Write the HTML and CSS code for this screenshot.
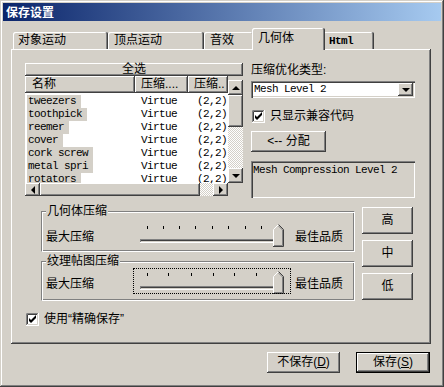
FILE: index.html
```html
<!DOCTYPE html>
<html>
<head>
  <title>保存设置</title>
  <link rel="stylesheet" href="styles.css">
</head>
<body>
  <div class="window">
    <!-- Title bar -->
    <div class="titlebar">保存设置</div>

    <div class="client">
      <!-- Tab strip -->
      <div class="tabs">
        <div class="tab tab-object">对象运动</div>
        <div class="tab tab-vertex">顶点运动</div>
        <div class="tab tab-sound">音效</div>
        <div class="tab tab-geometry selected">几何体</div>
        <div class="tab tab-html mono">Html</div>
      </div>

      <div class="panel">
        <div class="top">
          <!-- Mesh list -->
          <div class="listview">
            <div class="select-all">全选</div>
            <div class="list-header">
              <div class="col col-name">名称</div>
              <div class="col col-type">压缩....</div>
              <div class="col col-level">压缩..</div>
            </div>
            <div class="vscroll">
              <div class="arrow up"></div>
              <div class="thumb"></div>
              <div class="track"></div>
              <div class="arrow down"></div>
            </div>
            <div class="list-body mono">
              <div class="row"><div class="cell-name"><span class="hl">tweezers</span></div><div class="cell-type">Virtue</div><div class="cell-level">(2,2)</div></div>
              <div class="row"><div class="cell-name"><span class="hl">toothpick</span></div><div class="cell-type">Virtue</div><div class="cell-level">(2,2)</div></div>
              <div class="row"><div class="cell-name"><span class="hl">reemer</span></div><div class="cell-type">Virtue</div><div class="cell-level">(2,2)</div></div>
              <div class="row"><div class="cell-name"><span class="hl">cover</span></div><div class="cell-type">Virtue</div><div class="cell-level">(2,2)</div></div>
              <div class="row"><div class="cell-name"><span class="hl">cork screw</span></div><div class="cell-type">Virtue</div><div class="cell-level">(2,2)</div></div>
              <div class="row"><div class="cell-name"><span class="hl">metal spri</span></div><div class="cell-type">Virtue</div><div class="cell-level">(2,2)</div></div>
              <div class="row"><div class="cell-name"><span class="hl">rotators</span></div><div class="cell-type">Virtue</div><div class="cell-level">(2,2)</div></div>
            </div>
            <div class="hscroll">
              <div class="arrow left"></div>
              <div class="thumb"></div>
              <div class="track"></div>
              <div class="arrow right"></div>
            </div>
          </div>

          <!-- Compression options -->
          <div class="options">
            <div class="label">压缩优化类型:</div>
            <div class="combo">
              <span class="combo-text mono">Mesh Level 2</span>
              <div class="arrow down combo-button"></div>
            </div>
            <div class="check">
              <svg class="checkbox" width="13" height="13" viewBox="0 0 13 13">
                <rect width="13" height="13" fill="#fff"/>
                <path d="M0.5 12 V0.5 H12" stroke="#808080" fill="none"/>
                <path d="M1.5 11 V1.5 H11" stroke="#404040" fill="none"/>
                <path d="M1.5 11.5 H11.5 V1" stroke="#d4d0c8" fill="none"/>
                <path d="M3 5 V8 L5 10 L10 5 V2 L5 7 Z" fill="#000"/>
              </svg>
              <span>只显示兼容代码</span>
            </div>
            <div class="button assign">&lt;-- 分配</div>
            <div class="textbox mono">Mesh Compression Level 2</div>
          </div>
        </div>

        <div class="groups-row">
          <div class="groups">
            <fieldset class="group group-mesh">
              <legend>几何体压缩</legend>
              <div class="slider-row">
                <span class="slider-label">最大压缩</span>
                <div class="trackbar">
                  <svg width="158" height="26" viewBox="0 0 158 26">
                    <g fill="#000">
                      <rect x="14" y="5" width="1" height="3"/>
                      <rect x="30" y="5" width="1" height="3"/>
                      <rect x="46" y="5" width="1" height="3"/>
                      <rect x="62" y="5" width="1" height="3"/>
                      <rect x="79" y="5" width="1" height="3"/>
                      <rect x="95" y="5" width="1" height="3"/>
                      <rect x="112" y="5" width="1" height="3"/>
                      <rect x="128" y="5" width="1" height="3"/>
                      <rect x="145" y="4" width="1" height="3"/>
                    </g>
                    <rect x="7" y="18" width="144" height="4" fill="#fff"/>
                    <rect x="7" y="18" width="143" height="3" fill="#808080"/>
                    <rect x="8" y="19" width="142" height="2" fill="#d4d0c8"/>
                    <rect x="8" y="19" width="141" height="1" fill="#404040"/>
                    <path d="M140 26 V8 L145 3 L151 9 V26 Z" fill="#d4d0c8"/>
                    <path d="M140.5 25 V8.5 L145.5 3.5" stroke="#fff" fill="none"/>
                    <path d="M145.5 3.5 L150.5 8.5 V25.5 H140" stroke="#404040" fill="none"/>
                    <path d="M145.5 5 L149.5 9 V24.5 H141" stroke="#808080" fill="none"/>
                  </svg>
                </div>
                <span class="slider-label">最佳品质</span>
              </div>
            </fieldset>
            <fieldset class="group group-texture">
              <legend>纹理帖图压缩</legend>
              <div class="slider-row">
                <span class="slider-label">最大压缩</span>
                <div class="trackbar focused">
                  <svg width="158" height="26" viewBox="0 0 158 26">
                    <g fill="#000">
                      <rect x="14" y="5" width="1" height="3"/>
                      <rect x="35" y="5" width="1" height="3"/>
                      <rect x="58" y="5" width="1" height="3"/>
                      <rect x="80" y="5" width="1" height="3"/>
                      <rect x="101" y="5" width="1" height="3"/>
                      <rect x="123" y="5" width="1" height="3"/>
                      <rect x="145" y="4" width="1" height="3"/>
                    </g>
                    <rect x="7" y="18" width="144" height="4" fill="#fff"/>
                    <rect x="7" y="18" width="143" height="3" fill="#808080"/>
                    <rect x="8" y="19" width="142" height="2" fill="#d4d0c8"/>
                    <rect x="8" y="19" width="141" height="1" fill="#404040"/>
                    <path d="M140 26 V8 L145 3 L151 9 V26 Z" fill="#d4d0c8"/>
                    <path d="M140.5 25 V8.5 L145.5 3.5" stroke="#fff" fill="none"/>
                    <path d="M145.5 3.5 L150.5 8.5 V25.5 H140" stroke="#404040" fill="none"/>
                    <path d="M145.5 5 L149.5 9 V24.5 H141" stroke="#808080" fill="none"/>
                  </svg>
                </div>
                <span class="slider-label">最佳品质</span>
              </div>
            </fieldset>
          </div>

          <!-- Quality presets -->
          <div class="presets">
            <div class="button preset">高</div>
            <div class="button preset">中</div>
            <div class="button preset">低</div>
          </div>
        </div>

        <div class="check exact-save">
          <svg class="checkbox" width="13" height="13" viewBox="0 0 13 13">
            <rect width="13" height="13" fill="#fff"/>
            <path d="M0.5 12 V0.5 H12" stroke="#808080" fill="none"/>
            <path d="M1.5 11 V1.5 H11" stroke="#404040" fill="none"/>
            <path d="M1.5 11.5 H11.5 V1" stroke="#d4d0c8" fill="none"/>
            <path d="M3 5 V8 L5 10 L10 5 V2 L5 7 Z" fill="#000"/>
          </svg>
          <span>使用“精确保存”</span>
        </div>
      </div>

      <!-- Dialog buttons -->
      <div class="footer">
        <div class="button footer-button">不保存(<u>D</u>)</div>
        <div class="button footer-button default">保存(<u>S</u>)</div>
      </div>
    </div>
  </div>
</body>
</html>
```

FILE: styles.css
```css
* {
  box-sizing: border-box;
}

body {
  margin: 0;
  font-family: "Liberation Sans", "Noto Sans CJK SC", sans-serif;
  font-size: 12px;
  line-height: 13px;
  color: #000;
  background-color: #d4d0c8;
}

/* Fixed-width text, 6px per character like the old system font */
.mono {
  font-family: "Liberation Mono", monospace;
  font-size: 11px;
  letter-spacing: -0.6px;
}

/* Window frame */
.window {
  width: 444px;
  height: 387px;
  padding: 3px;
  background-color: #d4d0c8;
  box-shadow: inset -1px -1px #404040, inset 1px 1px #d4d0c8, inset -2px -2px #808080, inset 2px 2px #fff;
}

.titlebar {
  height: 18px;
  line-height: 18px;
  padding-left: 3px;
  color: #fff;
  font-weight: bold;
  font-family: "Noto Sans CJK SC", sans-serif;
  background: linear-gradient(to right, #0a246a, #a6caf0);
}

.client {
  padding: 7px 10px 0 8px;
}

/* Tabs */
.tabs {
  display: flex;
  align-items: flex-end;
  height: 21px;
  padding-left: 2px;
}

.tab {
  height: 17px;
  padding: 2px 0 0 6px;
  border-radius: 2px 2px 0 0;
  box-shadow: inset -1px 0 #404040, inset 1px 1px #fff, inset -2px 0 #808080;
  white-space: nowrap;
}

.tab-object {
  width: 95px;
  padding-left: 5px;
}

.tab-vertex {
  width: 96px;
}

.tab-sound {
  width: 50px;
}

.tab-geometry {
  width: 73px;
}

.tab-html {
  width: 51px;
  padding-top: 3px;
  font-weight: bold;
}

.tab.selected {
  position: relative;
  z-index: 1;
  height: 22px;
  margin: 0 -2px -1px -2px;
  padding-top: 4px;
  background-color: #d4d0c8;
}

.panel {
  height: 295px;
  padding: 14px 0 0 14px;
  box-shadow: inset -1px -1px #404040, inset 1px 1px #fff, inset -2px -2px #808080;
}

.top {
  display: flex;
  gap: 8px;
}

/* Raised 3D look shared by buttons */
.button,
.arrow,
.thumb,
.select-all,
.col {
  background-color: #d4d0c8;
  box-shadow: inset -1px -1px #404040, inset 1px 1px #fff, inset -2px -2px #808080;
}

/* List view */
.listview {
  width: 218px;
  display: grid;
  grid-template-columns: 203px 15px;
  grid-template-rows: 13px 17px 90px 13px;
}

.select-all {
  grid-column: 1 / 3;
  text-align: center;
  line-height: 13px;
}

.list-header {
  display: flex;
}

.col {
  height: 17px;
  line-height: 17px;
  padding-left: 6px;
  overflow: hidden;
  white-space: nowrap;
}

.col-name {
  width: 110px;
  padding-left: 7px;
}

.col-type {
  width: 53px;
}

.col-level {
  width: 40px;
}

.vscroll {
  grid-column: 2;
  grid-row: 2 / 4;
  margin-top: 4px;
  display: flex;
  flex-direction: column;
}

.vscroll .arrow {
  height: 15px;
}

.vscroll .thumb {
  height: 32px;
}

.track {
  flex: 1;
  background: repeating-conic-gradient(#d4d0c8 0 25%, #fff 0 50%) 0 0 / 2px 2px;
}

.list-body {
  grid-column: 1;
  grid-row: 3;
  padding-top: 2px;
  overflow: hidden;
  background-color: #fff;
}

.row {
  display: grid;
  grid-template-columns: 110px 53px 40px;
  height: 13px;
  line-height: 13px;
  white-space: nowrap;
}

.cell-name {
  padding-left: 2px;
}

.hl {
  display: inline-block;
  padding: 0 5px 0 1px;
  background-color: #d4d0c8;
}

.cell-type {
  padding-left: 6px;
}

.cell-level {
  padding-left: 9px;
}

.hscroll {
  grid-column: 1;
  grid-row: 4;
  display: flex;
}

.hscroll .arrow {
  width: 15px;
}

.hscroll .thumb {
  width: 160px;
}

/* Scroll arrows */
.arrow {
  display: flex;
  align-items: center;
  justify-content: center;
}

.arrow::after {
  content: "";
  border: 4px solid transparent;
}

.arrow.up::after {
  border-top-width: 0;
  border-bottom-color: #000;
}

.arrow.down::after {
  border-bottom-width: 0;
  border-top-color: #000;
}

.arrow.left::after {
  border-left-width: 0;
  border-right-color: #000;
}

.arrow.right::after {
  border-right-width: 0;
  border-left-color: #000;
}

/* Right column */
.options {
  width: 164px;
  display: flex;
  flex-direction: column;
}

.label {
  margin-top: 1px;
  height: 13px;
}

.combo {
  margin-top: 4px;
  height: 17px;
  display: flex;
  align-items: center;
  justify-content: space-between;
  padding: 2px;
  background-color: #fff;
  box-shadow: inset 1px 1px #808080, inset 2px 2px #404040, inset -1px -1px #fff, inset -2px -2px #d4d0c8;
}

.combo-text {
  padding-left: 1px;
}

.combo-button {
  width: 15px;
  height: 13px;
}

.check {
  display: flex;
  align-items: center;
  gap: 5px;
  height: 13px;
}

.options .check {
  margin-top: 12px;
  padding-left: 1px;
}

.button {
  display: flex;
  align-items: center;
  justify-content: center;
  white-space: nowrap;
}

.assign {
  margin-top: 8px;
  width: 75px;
  height: 21px;
}

.textbox {
  margin-top: 9px;
  height: 37px;
  padding: 3px 2px;
  box-shadow: inset 1px 1px #808080, inset 2px 2px #404040, inset -1px -1px #fff, inset -2px -2px #d4d0c8;
}

/* Compression groups */
.groups-row {
  display: flex;
  gap: 7px;
  margin: 7px 0 0 16px;
}

.groups {
  width: 314px;
  display: flex;
  flex-direction: column;
  gap: 3px;
}

.group {
  margin: 0;
  padding: 3px 4px 4px 4px;
  border: 1px solid #808080;
  border-right-color: #fff;
  border-bottom-color: #fff;
  box-shadow: inset 1px 1px #fff, inset -1px -1px #808080;
}

.group legend {
  padding: 0 1px;
  line-height: 13px;
  background-color: #d4d0c8;
}

.group-texture {
  padding-top: 0;
  padding-bottom: 6px;
}

.slider-row {
  display: flex;
  align-items: flex-start;
}

.slider-label {
  margin-top: 10px;
  white-space: nowrap;
}

.slider-row .slider-label:first-child {
  width: 87px;
}

.trackbar {
  width: 158px;
  height: 26px;
  margin-right: 4px;
}

.trackbar svg {
  display: block;
}

.trackbar.focused {
  outline: 1px dotted #000;
  outline-offset: -1px;
}

.presets {
  display: flex;
  flex-direction: column;
  gap: 6px;
  margin-top: 2px;
}

.preset {
  width: 51px;
  height: 27px;
}

.exact-save {
  margin: 12px 0 0 1px;
}

/* Dialog buttons */
.footer {
  display: flex;
  justify-content: flex-end;
  gap: 16px;
  margin: 8px 1px 0 0;
}

.footer-button {
  width: 73px;
  height: 21px;
}

.footer-button.default {
  width: 74px;
  box-shadow: inset 0 0 0 1px #000, inset -2px -2px #404040, inset 2px 2px #fff, inset -3px -3px #808080;
}
```
